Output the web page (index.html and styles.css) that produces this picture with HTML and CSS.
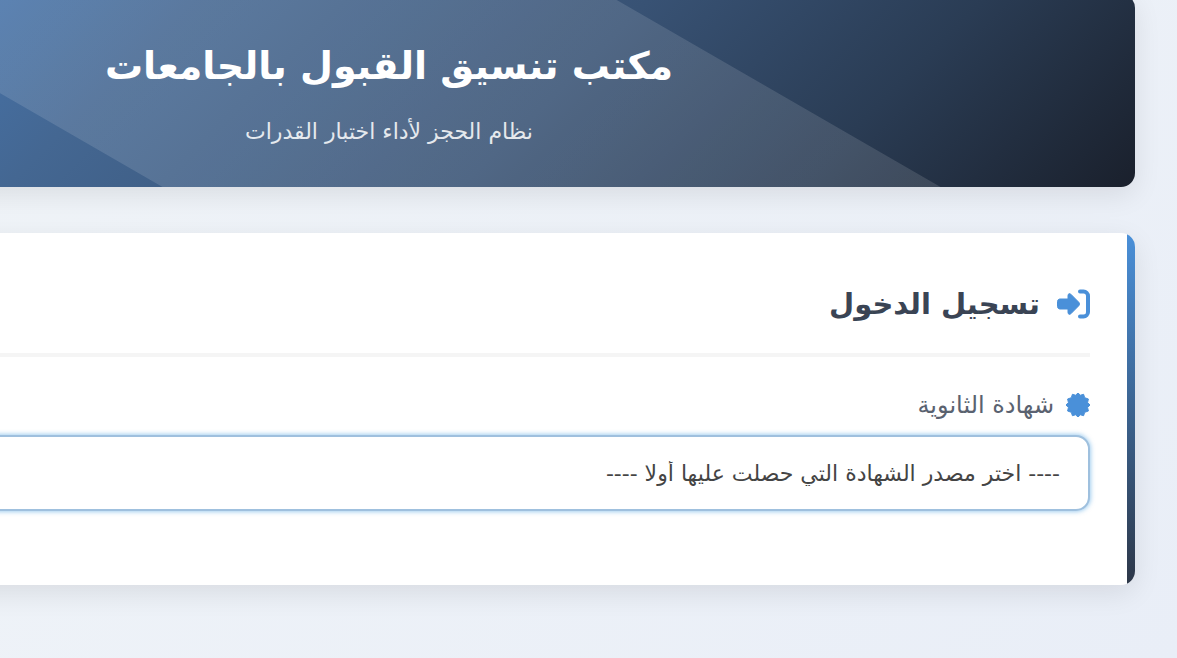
FILE: index.html
```html
<!DOCTYPE html>
<html lang="ar" dir="rtl">
<head>
    <meta charset="UTF-8">
    <meta name="viewport" content="width=device-width, initial-scale=1.0">
    <title>مكتب تنسيق القبول بالجامعات</title>
    <link rel="stylesheet" href="styles.css">
</head>
<body>
    <div class="container">
        <header class="header">
            <h1>مكتب تنسيق القبول بالجامعات</h1>
            <p>نظام الحجز لأداء اختبار القدرات</p>
        </header>
        <main class="card">
            <h2 class="card-title">
                <svg class="icon-login" viewBox="0 0 34 30" aria-hidden="true">
                    <path d="M4 10h8V6.500c0-1.800 1.600-2.400 2.800-1.300l8 8.100c.9 1 .9 2.400 0 3.400l-8 8.100c-1.200 1.100-2.800.5-2.800-1.300V20H4c-1.400 0-2.500-1.100-2.500-2.500v-5C1.500 11.100 2.600 10 4 10z" fill="currentColor" stroke="currentColor" stroke-linejoin="round"/>
                    <path d="M24 2.500h3.500a4.500 4.500 0 0 1 4.500 4.500v16a4.500 4.500 0 0 1-4.500 4.500H24" fill="none" stroke="currentColor" stroke-width="4" stroke-linecap="round"/>
                </svg>
                تسجيل الدخول
            </h2>
            <form>
                <label class="field-label" for="certificate">
                    <svg class="icon-badge" viewBox="0 0 24 24" aria-hidden="true">
                        <path d="M12 0l2.400 2.200L17.600 1.300l1.100 3.400 3.700 1.300-.8 3.500L24 12l-2.400 2.500.8 3.500-3.700 1.300-1.100 3.400-3.200-.9L12 24l-2.400-2.200-3.200.9-1.100-3.400L1.600 18l.8-3.500L0 12l2.400-2.500L1.600 6l3.700-1.300 1.100-3.400 3.200.9z" fill="currentColor" stroke="currentColor" stroke-linejoin="round"/>
                    </svg>
                    شهادة الثانوية
                </label>
                <select class="field-select" id="certificate">
                    <option>---- اختر مصدر الشهادة التي حصلت عليها أولا ----</option>
                </select>
            </form>
        </main>
    </div>
</body>
</html>
```
FILE: styles.css
```css
* {
    box-sizing: border-box;
}
body {
    margin: 0;
    min-height: 100vh;
    background: linear-gradient(135deg, #f0f4f8, #e9eef7);
    color: #3a4454;
    font-family: "DejaVu Sans", sans-serif;
    overflow: hidden;
}
/* wider than the window, runs off its left edge */
.container {
    margin: -6px 42px 0 -357px;
}
.header {
    padding: 48px 36px 39px;
    text-align: center;
    color: #fff;
    border-radius: 14px;
    background:
        linear-gradient(30deg, transparent 28.4%, rgba(255, 255, 255, 0.12) 28.5%, rgba(255, 255, 255, 0.12) 71%, transparent 71.1%),
        linear-gradient(135deg, #4a86cc, #4672a8 21%, #446792 33%, #385274 60%, #2a3c54 80%, #1a202c);
    box-shadow: 0 8px 28px rgba(0, 0, 0, 0.09);
}
.header h1 {
    margin: 0 0 26px;
    font-size: 38px;
    line-height: 48px;
}
.header p {
    margin: 0;
    font-size: 22px;
    line-height: 32px;
    opacity: 0.85;
}
.card {
    position: relative;
    margin-top: 46px;
    padding: 36px 45px 74px;
    background: #fff;
    border-radius: 14px;
    box-shadow: 0 8px 28px rgba(0, 0, 0, 0.09);
    overflow: hidden;
}
.card::before {
    content: "";
    position: absolute;
    top: 0;
    right: 0;
    width: 8px;
    height: 100%;
    background: linear-gradient(#4a90d9, #2d3748);
}
.card-title {
    display: flex;
    align-items: center;
    gap: 16px;
    margin: 0 0 32px;
    padding-bottom: 14px;
    border-bottom: 4px solid #f5f5f5;
    font-size: 29px;
    line-height: 70px;
}
.icon-login {
    width: 34px;
    height: 30px;
    color: #4a90d9;
}
.field-label {
    display: flex;
    align-items: center;
    gap: 12px;
    margin-bottom: 14px;
    font-size: 24px;
    line-height: 32px;
    color: #5a6270;
}
.icon-badge {
    width: 24px;
    height: 24px;
    color: #4a90d9;
}
.field-select {
    display: block;
    width: 100%;
    height: 76px;
    padding: 0 28px;
    appearance: none;
    border: 2px solid #9fc0de;
    border-radius: 14px;
    background: #fff;
    box-shadow: 0 0 4px 1px rgba(74, 160, 226, 0.5);
    color: #444;
    font-family: inherit;
    font-size: 22px;
}
```
